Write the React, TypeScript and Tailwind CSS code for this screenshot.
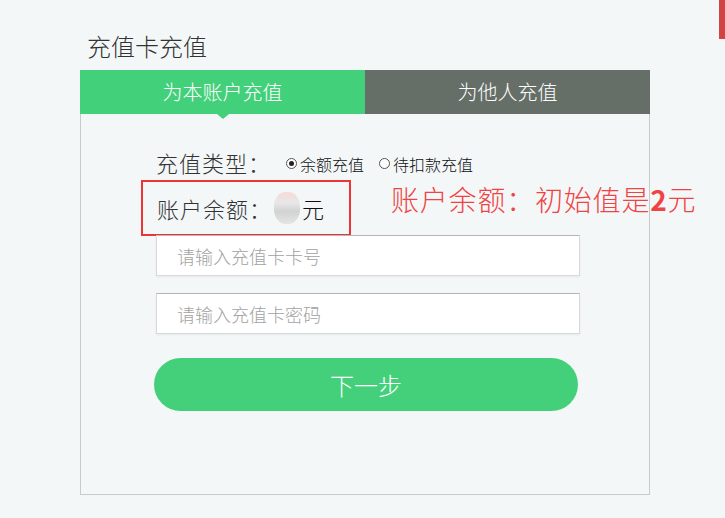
import { useState } from 'react'

const font = { fontFamily: "'Noto Sans CJK SC', 'Noto Sans', sans-serif" }

function Radio({ checked, label, onClick }: { checked: boolean; label: string; onClick: () => void }) {
  return (
    <label className="flex items-center gap-[3px] cursor-pointer" onClick={onClick}>
      <span className="w-[11px] h-[11px] rounded-full border border-[#555] bg-white flex items-center justify-center">
        {checked && <span className="w-[5px] h-[5px] rounded-full bg-[#222]" />}
      </span>
      <span className="text-[16px] font-light text-[#111]">{label}</span>
    </label>
  )
}

export default function App() {
  const [type, setType] = useState('balance')

  return (
    <div className="relative w-[725px] h-[518px] bg-[#f4f7f8] overflow-hidden" style={font}>
      <div className="absolute right-0 top-0 w-[6px] h-[39px] bg-[#d24343]" />

      <h1 className="pl-[87px] pt-[30px] text-[24px] leading-[32px] font-light text-[#333]">充值卡充值</h1>

      <div className="relative ml-[80px] mt-[8px] w-[570px]">
        <div className="flex h-[44px]">
          <div className="relative flex-1 bg-[#42d07b] flex items-center justify-center text-white text-[20px] font-light">
            为本账户充值
            <span className="absolute left-1/2 -translate-x-1/2 top-full w-0 h-0 border-l-[6px] border-r-[6px] border-t-[5px] border-l-transparent border-r-transparent border-t-[#42d07b]" />
          </div>
          <div className="flex-1 bg-[#666e68] flex items-center justify-center text-white text-[20px] font-light">为他人充值</div>
        </div>

        <div className="h-[381px] border-x border-b border-[#c8cbcb] pt-[33px]">
          <div className="flex items-center pl-[75px] h-[30px]">
            <span className="text-[22px] tracking-[1px] font-light text-[#333] mr-[15px]">充值类型：</span>
            <div className="flex items-center gap-[15px] mt-[3px]">
              <Radio checked={type === 'balance'} label="余额充值" onClick={() => setType('balance')} />
              <Radio checked={type === 'debit'} label="待扣款充值" onClick={() => setType('debit')} />
            </div>
          </div>

          <div className="ml-[60px] mt-[3px] w-[210px] h-[56px] border-2 border-[#ee3535] flex items-center pl-[14px]">
            <span className="text-[22px] tracking-[1px] font-light text-[#333]">账户余额：</span>
            <span className="w-[26px] h-[32px] rounded-[45%] bg-[linear-gradient(180deg,#f7dada_0%,#e7e7e7_35%,#d2d2d2_60%,#e4e4e4_100%)] mx-[2px]" />
            <span className="text-[22px] font-light text-[#111]">元</span>
          </div>

          <div className="ml-[75px] -mt-px flex flex-col gap-[17px] w-[424px]">
            <input
              placeholder="请输入充值卡卡号"
              className="h-[41px] bg-white border border-[#d6dadd] border-t-[#b4b6b8] shadow-[0_1px_2px_rgba(0,0,0,0.06)] px-[20px] text-[18px] font-light placeholder:text-[#a2a2a2] outline-none"
            />
            <input
              placeholder="请输入充值卡密码"
              className="h-[41px] bg-white border border-[#d6dadd] border-t-[#b4b6b8] shadow-[0_1px_2px_rgba(0,0,0,0.06)] px-[20px] text-[18px] font-light placeholder:text-[#a2a2a2] outline-none"
            />
          </div>

          <button className="ml-[73px] mt-[24px] w-[424px] h-[53px] rounded-full bg-[#44d07b] text-white text-[24px] font-light">
            下一步
          </button>
        </div>

        <div className="absolute left-[311px] top-[111px] text-[28px] leading-[36px] tracking-[0.8px] font-light text-[#f04343] whitespace-nowrap">
          账户余额：初始值是<span className="font-bold">2</span>元
        </div>
      </div>
    </div>
  )
}
